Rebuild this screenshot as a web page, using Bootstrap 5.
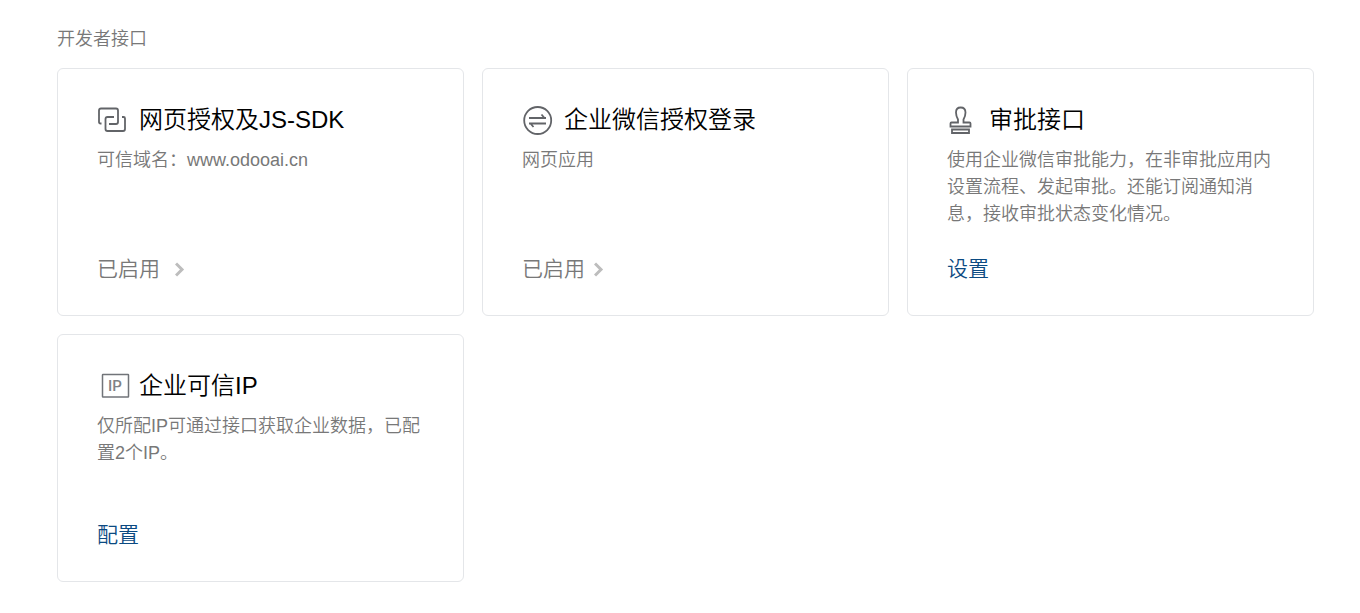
<!DOCTYPE html>
<html lang="zh-CN">
<head>
<meta charset="utf-8">
<meta name="viewport" content="width=device-width, initial-scale=1">
<title>开发者接口</title>
<link href="https://cdn.jsdelivr.net/npm/bootstrap@5.3.0/dist/css/bootstrap.min.css" rel="stylesheet">
<style>
  body { font-family: "Liberation Sans", "Noto Sans CJK SC", sans-serif; font-weight: 350; font-size: 18px; line-height: 27px; color: #787878; background: #fff; }
  .dev-page { padding: 26px 46px 31px 57px; }
  .dev-heading { font-size: 18px; line-height: 27px; font-weight: 350; margin-bottom: 15px; color: #787878; }
  .dev-grid { --bs-gutter-x: 18px; --bs-gutter-y: 18px; }
  .api-card { min-height: 248px; border: 1px solid #e4e6e9; border-radius: 6px; padding: 33px 39px 30px; color: #787878; }
  .api-title { font-size: 24px; line-height: 36px; font-weight: 350; color: #000; gap: 6px; margin-bottom: 9px; }
  .api-icon { width: 36px; height: 36px; flex: none; fill: none; stroke: #626468; stroke-width: 2; }
  .api-icon text { font-family: Roboto, sans-serif; font-size: 15px; font-weight: 500; fill: #808286; stroke: none; }
  .api-action { font-size: 21px; line-height: 32px; color: #0b4a82; text-decoration: none; }
  .api-action:hover { text-decoration: underline; }
  .api-status { color: #787878; gap: 9px; }
  .api-status-wide { gap: 15px; }
  .api-chevron { width: 10px; height: 16px; fill: none; stroke: #bdbdbd; stroke-width: 3; }
</style>
</head>
<body>
<main class="dev-page">
  <h1 class="dev-heading">开发者接口</h1>
  <div class="row row-cols-1 row-cols-md-2 row-cols-lg-3 dev-grid">
    <div class="col">
      <section class="card h-100 api-card">
        <h2 class="d-flex align-items-center api-title">
          <svg class="api-icon" viewBox="0 0 36 36" aria-hidden="true"><path d="M4.500 21.500H3.500q-1.500 0-1.500-1.500V8.500q0-2 2-2H19q2 0 2 2V20q0 2-2 2h-7M17 15h-6.500q-2 0-2 2v10q0 2 2 2H26q2 0 2-2V16.500Q28 15 26.500 15H25" stroke-width="1.800"/></svg>
          <span>网页授权及JS-SDK</span>
        </h2>
        <p class="mb-0">可信域名：www.odooai.cn</p>
        <a href="#" class="d-flex align-items-center align-self-start mt-auto api-action api-status api-status-wide">已启用<svg class="api-chevron" viewBox="0 0 10 16" aria-hidden="true"><path d="M1 2.500l6 6-6 6"/></svg></a>
      </section>
    </div>
    <div class="col">
      <section class="card h-100 api-card">
        <h2 class="d-flex align-items-center api-title">
          <svg class="api-icon" viewBox="0 0 36 36" aria-hidden="true"><circle cx="15.700" cy="18.500" r="13.500" stroke-width="1.800"/><path d="M7 16H24M19.500 12.500l3 3.500M24 21.500H7M11.500 25l-3-3.500" stroke-width="1.800"/></svg>
          <span>企业微信授权登录</span>
        </h2>
        <p class="mb-0">网页应用</p>
        <a href="#" class="d-flex align-items-center align-self-start mt-auto api-action api-status">已启用<svg class="api-chevron" viewBox="0 0 10 16" aria-hidden="true"><path d="M1 2.500l6 6-6 6"/></svg></a>
      </section>
    </div>
    <div class="col">
      <section class="card h-100 api-card">
        <h2 class="d-flex align-items-center api-title">
          <svg class="api-icon" viewBox="0 0 36 36" aria-hidden="true"><path stroke-width="1.800" d="M11 20.500v-3Q9 14 9 10.500Q9 5.500 13.700 5.500T18.500 10.500Q18.500 14 16.500 17.500v3H22.500q1 0 1 1V24.500h-20v-3q0-1 1-1zM5 27.500h17v3.500H5z"/></svg>
          <span>审批接口</span>
        </h2>
        <p class="mb-0">使用企业微信审批能力，在非审批应用内设置流程、发起审批。还能订阅通知消息，接收审批状态变化情况。</p>
        <a href="#" class="align-self-start mt-auto api-action">设置</a>
      </section>
    </div>
    <div class="col">
      <section class="card h-100 api-card">
        <h2 class="d-flex align-items-center api-title">
          <svg class="api-icon" viewBox="0 0 36 36" aria-hidden="true"><rect x="5.500" y="6.500" width="26" height="22.500" rx="0.500" stroke="#717479" stroke-width="1.500"/><text x="18" y="23" text-anchor="middle">IP</text></svg>
          <span>企业可信IP</span>
        </h2>
        <p class="mb-0">仅所配IP可通过接口获取企业数据，已配置2个IP。</p>
        <a href="#" class="align-self-start mt-auto api-action">配置</a>
      </section>
    </div>
  </div>
</main>
<script src="https://cdn.jsdelivr.net/npm/bootstrap@5.3.0/dist/js/bootstrap.bundle.min.js"></script>
</body>
</html>
